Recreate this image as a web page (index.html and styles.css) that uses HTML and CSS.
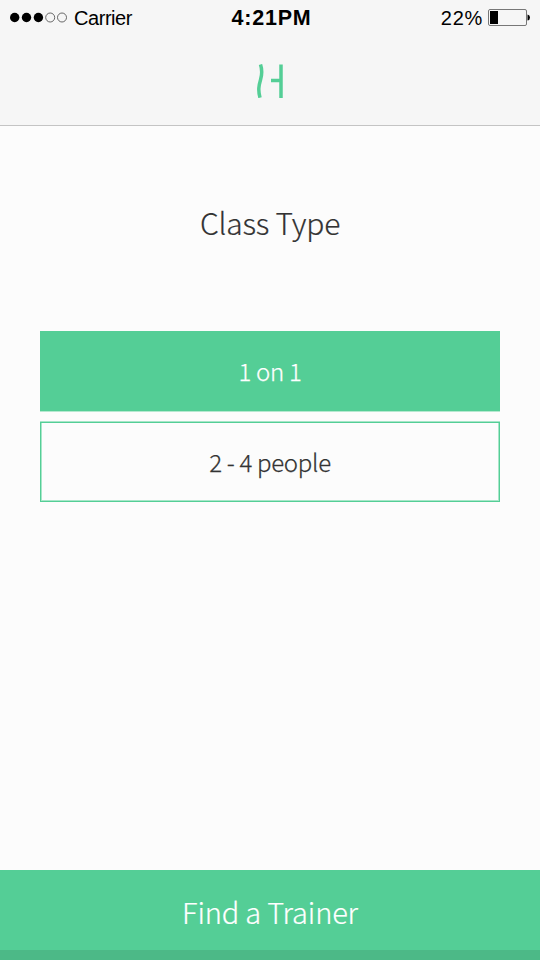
FILE: index.html
```html
<!DOCTYPE html>
<html lang="en">
<head>
<meta charset="utf-8">
<title>Class Type</title>
<link rel="stylesheet" href="styles.css">
</head>
<body>
<header class="header">
  <div class="status">
    <div class="status-left">
      <svg class="signal" width="58" height="12" viewBox="0 0 58 12">
        <g fill="#000"><circle cx="4.700" cy="5.500" r="4.700"/><circle cx="16.500" cy="5.500" r="4.700"/><circle cx="28.400" cy="5.500" r="4.700"/></g>
        <g fill="none" stroke="#444" stroke-width=".8"><circle cx="40.200" cy="5.500" r="4.500"/><circle cx="52" cy="5.500" r="4.500"/></g>
      </svg>
      <span class="carrier">Carrier</span>
    </div>
    <span class="time">4:21PM</span>
    <div class="status-right">
      <span class="percent">22%</span>
      <svg class="battery" width="42" height="18" viewBox="0 0 42 18">
        <rect x=".5" y=".5" width="38" height="16" rx="1.5" fill="none" stroke="#777"/>
        <path d="M2 2h8v13H2zM39.500 5.500q2.500 .5 2.500 3t-2.500 3z"/>
      </svg>
    </div>
  </div>
  <svg class="logo" width="28" height="34" viewBox="0 0 28 34">
    <path d="M4.500 .5C6 5 6.500 9 4.600 15.500S2 26 4 33.700M25 .5v33.500M15 16.500h10" fill="none" stroke="#54ce96" stroke-width="3.500"/>
  </svg>
</header>
<main class="content">
  <h1 class="title">Class Type</h1>
  <button class="option selected"><span>1 on 1</span></button>
  <button class="option outlined"><span>2 - 4 people</span></button>
</main>
<button class="submit"><span>Find a Trainer</span></button>
</body>
</html>
```
FILE: styles.css
```css
* { box-sizing: border-box; }
body {
  margin: 0;
  height: 960px;
  display: flex;
  flex-direction: column;
  overflow: hidden;
  background: #fcfcfc;
  color: #333;
  font-family: "Noto Sans CJK SC", "Noto Sans", sans-serif;
  font-weight: 300;
}
button { font: inherit; color: inherit; border: 0; border-radius: 0; padding: 0; }
.header {
  height: 126px;
  flex: none;
  background: #f6f6f6;
  border-bottom: 1px solid #c4c4c4;
}
.status {
  height: 36px;
  display: grid;
  grid-template-columns: 1fr auto 1fr;
  align-items: center;
  padding: 0 10px;
  color: #000;
  font: 400 20px/34px "Liberation Sans", Arial, sans-serif;
}
.status-left, .status-right { display: flex; align-items: center; }
.status-right { justify-content: flex-end; }
.carrier { margin-left: 6px; margin-top: -1px; letter-spacing: -.45px; }
.time { font-size: 21.5px; font-weight: 700; margin-left: 3px; letter-spacing: .8px; }
.percent { font-size: 20px; letter-spacing: .7px; }
.battery { margin-left: 5px; }
.logo { display: block; margin: 28px 0 0 256px; }
.content { flex: 1; padding: 72px 40px 0; }
.title {
  margin: 0 0 85px;
  font-size: 30px;
  line-height: 48px;
  font-weight: 300;
  letter-spacing: -.2px;
  text-align: center;
  -webkit-text-stroke: .2px;
}
.option {
  display: block;
  width: 100%;
  height: 80px;
  font-size: 24px;
  line-height: 80px;
  letter-spacing: -.3px;
  text-align: center;
  -webkit-text-stroke: .25px;
}
.selected { background: #54ce96; color: #fff; box-shadow: 0 1px #b5e9d0; }
.outlined {
  margin-top: 11px;
  line-height: 78px;
  background: transparent;
  border: 1px solid #54ce96;
  box-shadow: 0 -1px #a8e6c9, inset 1px 0 #a8e6c9, inset -1px 0 #a8e6c9, inset 0 -1px #a8e6c9;
}
.submit {
  flex: none;
  height: 90px;
  padding-top: 2px;
  background: #54ce96;
  border-bottom: 10px solid #4cb987;
  color: #fff;
  font-size: 29px;
  line-height: 78px;
  letter-spacing: -.15px;
  -webkit-text-stroke: .2px;
}
```
